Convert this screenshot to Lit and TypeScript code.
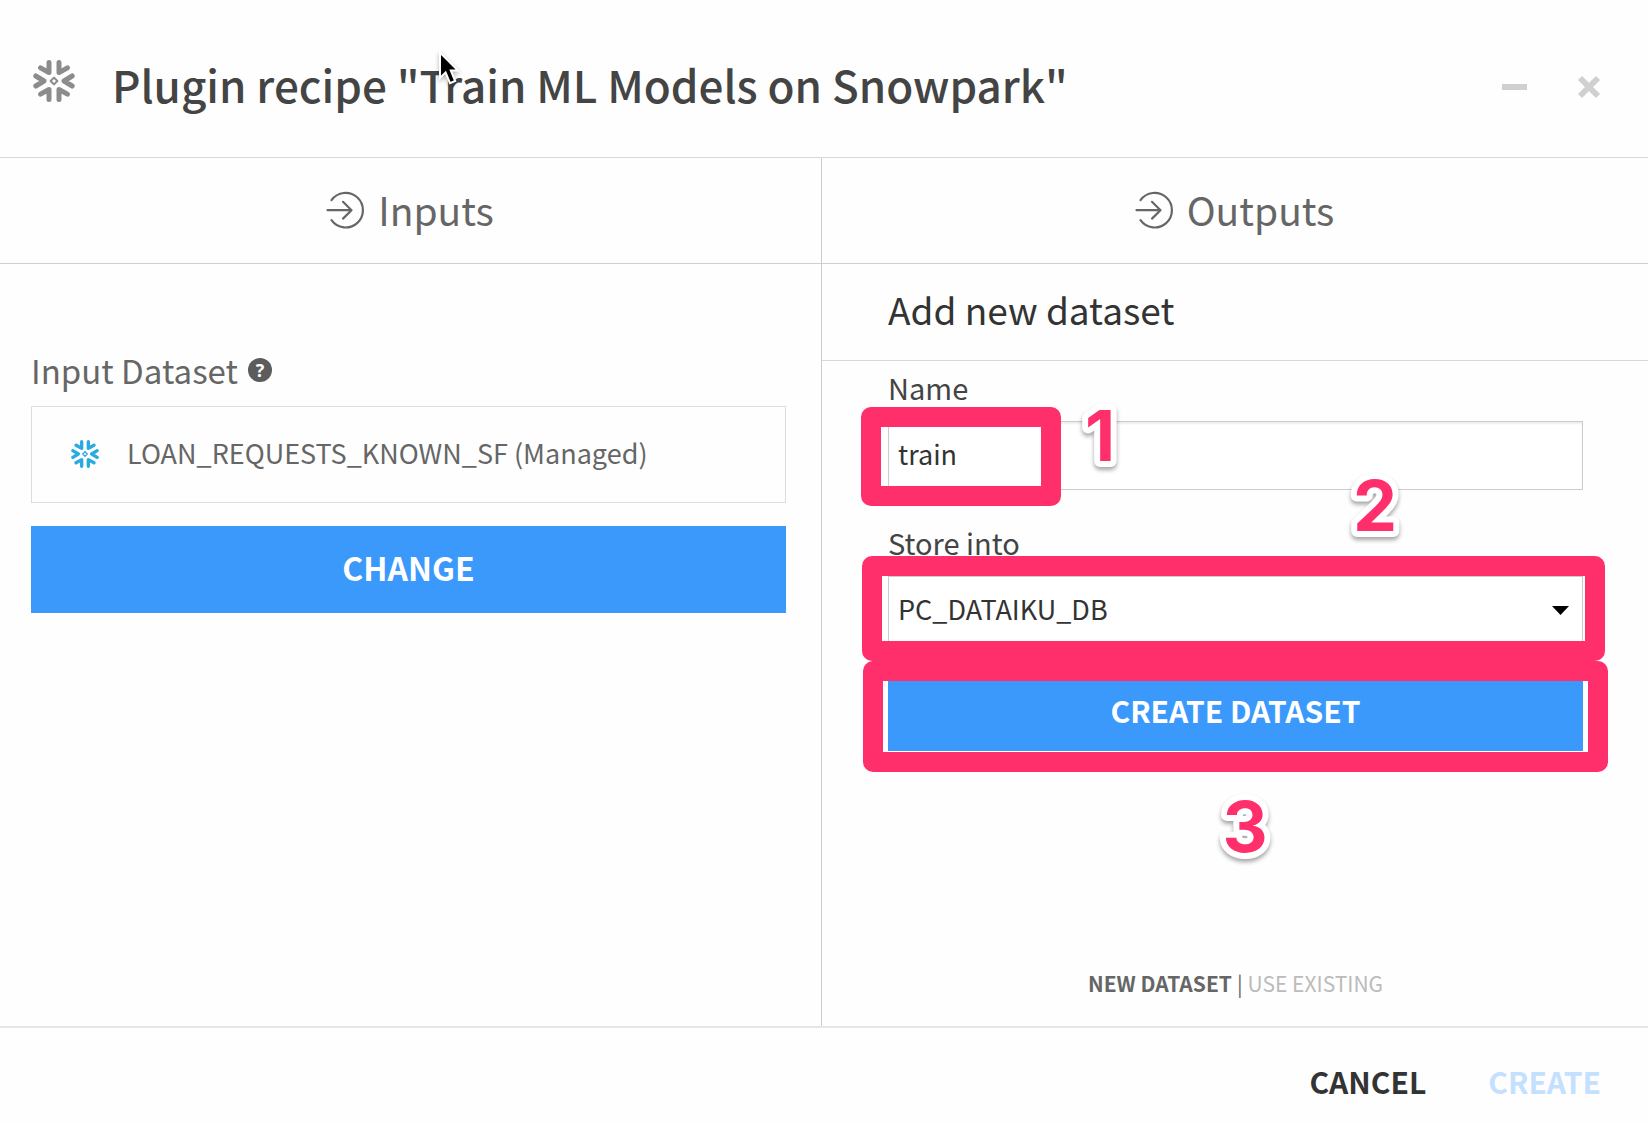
import { LitElement, html, css } from "lit";
import { customElement, property, state } from "lit/decorators.js";

const arrowInCircle = html`
  <svg class="circle-arrow" viewBox="0 0 37 38" width="37" height="38" aria-hidden="true">
    <path d="M4.5 10.2A17.3 17.3 0 1 1 4.5 30.2M0.5 20.2H24.5M16 11.8L24.5 20.2L16 28.6" />
  </svg>
`;

@customElement("snow-icon")
class SnowIcon extends LitElement {
  @property({ type: Number }) size = 42;

  static styles = css`
    :host {
      display: block;
      flex: none;
    }
    .flake {
      display: block;
      fill: none;
      stroke: currentColor;
      stroke-linecap: round;
      stroke-linejoin: round;
    }
    .arms {
      stroke-width: 5;
    }
    .core {
      stroke-width: 2;
    }
  `;

  render() {
    return html`
      <svg class="flake" viewBox="0 0 42 42" width=${this.size} height=${this.size} aria-hidden="true">
        <path
          class="arms"
          d="M16 2.5V12.6L7.6 7.8M26 2.5V12.6L34.4 7.8M16 39.5V29.4L7.6 34.2M26 39.5V29.4L34.4 34.2M2.8 16L11 21L2.8 26M39.2 16L31 21L39.2 26"
        />
        <path class="core" d="M21 17.6L24.4 21L21 24.4L17.6 21Z" />
      </svg>
    `;
  }
}

@customElement("app-root")
class AppRoot extends LitElement {
  @state() private datasetName = "train";

  static styles = css`
    :host {
      display: block;
      font-family: "Noto Sans CJK JP", "Noto Sans CJK SC", "Open Sans", sans-serif;
      color: #666;
      background: #fefefe;
    }
    * {
      box-sizing: border-box;
    }
    h1,
    h2,
    h3 {
      margin: 0;
      font-weight: 400;
    }
    button,
    input,
    select {
      font: inherit;
      margin: 0;
      border: 0;
      border-radius: 0;
      outline: 0;
    }
    button {
      padding: 0;
      background: none;
      color: inherit;
      cursor: pointer;
    }
    .dialog {
      display: flex;
      flex-direction: column;
      min-height: 100vh;
    }
    .header {
      display: flex;
      align-items: center;
      padding: 55px 47px 44px 33px;
      border-bottom: 1px solid #d9d9d9;
    }
    .header snow-icon {
      color: #8c8c8c;
      margin: 0 37px 6px 0;
    }
    .title {
      position: relative;
      flex: 1;
      font-size: 44px;
      line-height: 58px;
      font-weight: 500;
      color: #444;
    }
    .pointer {
      position: absolute;
      left: 324px;
      top: -4px;
      filter: drop-shadow(0 2px 2px rgba(0, 0, 0, 0.3));
    }
    .window-controls {
      display: flex;
      gap: 50px;
      color: #d0d0d0;
      padding-top: 6px;
    }
    .window-controls button,
    .window-controls svg {
      display: block;
    }
    .body {
      flex: 1;
      display: grid;
      grid-template-columns: 138fr 139fr;
    }
    .column {
      display: flex;
      flex-direction: column;
    }
    .column + .column {
      border-left: 1px solid #ccc;
    }
    .column-head {
      display: flex;
      align-items: center;
      justify-content: center;
      gap: 14px;
      padding: 25px 0 28px;
      border-bottom: 1px solid #d0d0d0;
      font-size: 39px;
      line-height: 52px;
      font-weight: 400;
    }
    .circle-arrow {
      fill: none;
      stroke: #666;
      stroke-width: 2.2;
      stroke-linecap: round;
      stroke-linejoin: round;
      overflow: visible;
    }
    .inputs {
      padding: 86px 35px 0 31px;
    }
    .role {
      display: flex;
      align-items: center;
      gap: 10px;
      margin-bottom: 16px;
      font-size: 33px;
      line-height: 40px;
    }
    .help {
      width: 24px;
      height: 24px;
      border-radius: 50%;
      background: #5c5c5c;
      color: #fff;
      font: 700 18px/24px "Open Sans", sans-serif;
      text-align: center;
    }
    .card {
      display: flex;
      align-items: center;
      gap: 28px;
      padding: 0 39px 5px;
      height: 97px;
      border: 1px solid #ddd;
      font-size: 27px;
    }
    .card snow-icon {
      margin-top: 4px;
      color: #29abe2;
    }
    .primary {
      display: block;
      width: 100%;
      background: #3b99fc;
      color: #fff;
      font-weight: 700;
    }
    .change {
      margin-top: 23px;
      padding: 19px 0 24px;
      font-size: 32px;
      line-height: 44px;
    }
    .form-title {
      padding: 19px 66px 25px;
      border-bottom: 1px solid #d9d9d9;
      font-size: 37px;
      line-height: 52px;
      color: #333;
    }
    .form {
      flex: 1;
      display: flex;
      flex-direction: column;
      padding: 9px 65px 27px 66px;
      color: #444;
    }
    .label {
      margin-bottom: 17px;
      font-size: 29px;
      line-height: 34px;
    }
    .field {
      position: relative;
      margin-bottom: 35px;
    }
    .text {
      display: block;
      width: 100%;
      height: 69px;
      padding: 0 9px 4px;
      border: 1px solid #ccc;
      background: #fff;
      box-shadow: inset 0 2px 2px rgba(0, 0, 0, 0.07);
      color: #333;
      font-size: 27px;
    }
    .store {
      margin-bottom: 26px;
    }
    .select {
      display: block;
      width: 100%;
      height: 66px;
      padding: 0 40px 2px 9px;
      appearance: none;
      border: 1px solid #ccc;
      background: #fff;
      color: #333;
      font-size: 27px;
    }
    .caret {
      position: absolute;
      right: 14px;
      top: 30px;
      pointer-events: none;
    }
    .action {
      position: relative;
    }
    .create-dataset {
      padding: 20px 0 19px;
      font-size: 30px;
      line-height: 44px;
    }
    .ring {
      position: absolute;
      border: 20px solid #ff2f6c;
      border-radius: 10px;
      pointer-events: none;
    }
    .ring-name {
      left: -27px;
      top: -14px;
      width: 200px;
      height: 99px;
    }
    .ring-store {
      inset: -20px -22px -19px -26px;
    }
    .ring-create {
      inset: -7px -25px -21px -25px;
    }
    .step {
      position: absolute;
      z-index: 1;
      overflow: visible;
      fill: #ff2f6c;
      stroke: #fff;
      stroke-width: 12px;
      stroke-linejoin: round;
      paint-order: stroke;
      font: 700 70px Inter, "Liberation Sans", sans-serif;
      text-anchor: middle;
      filter: drop-shadow(0 3px 2px rgba(0, 0, 0, 0.35));
      pointer-events: none;
    }
    .step-one {
      left: 182px;
      top: -20px;
    }
    .step-two {
      right: 178px;
      top: -105px;
    }
    .step-three {
      left: calc(50% - 21px);
      top: 124px;
    }
    .switch {
      display: flex;
      justify-content: center;
      gap: 5px;
      margin-top: auto;
      font-size: 21px;
      line-height: 32px;
      color: #666;
    }
    .switch .on {
      font-weight: 700;
    }
    .switch .off {
      color: #bbb;
    }
    .footer {
      display: flex;
      justify-content: flex-end;
      gap: 62px;
      padding: 31px 47px 21px;
      border-top: 2px solid #e6e6e6;
      font-size: 30px;
      line-height: 44px;
      font-weight: 700;
      color: #333;
    }
    .footer button:disabled {
      color: #c4e0ff;
      cursor: default;
    }
  `;

  private onName(e: Event) {
    this.datasetName = (e.target as HTMLInputElement).value;
  }

  private step(n: number, place: string) {
    return html`
      <svg class="step ${place}" viewBox="0 0 60 72" width="60" height="72">
        <text x="30" y="60">${n}</text>
      </svg>
    `;
  }

  render() {
    return html`
      <div class="dialog" role="dialog" aria-labelledby="title">
        <header class="header">
          <snow-icon .size=${42}></snow-icon>
          <h1 class="title" id="title">
            Plugin recipe "Train ML Models on Snowpark"
            <svg class="pointer" viewBox="0 0 24 36" width="24" height="36" aria-hidden="true">
              <path
                d="M4 1.5V27L9.6 21.6L14 32.2L19.2 30L14.8 19.6H22Z"
                fill="#000"
                stroke="#fff"
                stroke-width="2"
              />
            </svg>
          </h1>
          <div class="window-controls">
            <button aria-label="Minimize">
              <svg viewBox="0 0 25 24" width="25" height="24"><path d="M0 9H25V15H0Z" fill="currentColor" /></svg>
            </button>
            <button aria-label="Close">
              <svg viewBox="0 0 24 24" width="24" height="24">
                <path d="M3 3L21 21M21 3L3 21" stroke="currentColor" stroke-width="6" />
              </svg>
            </button>
          </div>
        </header>

        <main class="body">
          <section class="column">
            <h2 class="column-head">${arrowInCircle}Inputs</h2>
            <div class="inputs">
              <div class="role">
                Input Dataset
                <button class="help">?</button>
              </div>
              <div class="card">
                <snow-icon .size=${28}></snow-icon>
                <span>LOAN_REQUESTS_KNOWN_SF (Managed)</span>
              </div>
              <button class="primary change">CHANGE</button>
            </div>
          </section>

          <section class="column">
            <h2 class="column-head">${arrowInCircle}Outputs</h2>
            <h3 class="form-title">Add new dataset</h3>
            <div class="form">
              <label class="label" for="name">Name</label>
              <div class="field">
                <input class="text" id="name" type="text" .value=${this.datasetName} @input=${this.onName} />
                <div class="ring ring-name"></div>
                ${this.step(1, "step-one")}
              </div>
              <label class="label" for="store">Store into</label>
              <div class="field store">
                <select class="select" id="store">
                  <option>PC_DATAIKU_DB</option>
                </select>
                <svg class="caret" viewBox="0 0 17 9" width="17" height="9" aria-hidden="true">
                  <path d="M0 0H17L8.5 9Z" fill="#000" />
                </svg>
                <div class="ring ring-store"></div>
                ${this.step(2, "step-two")}
              </div>
              <div class="action">
                <button class="primary create-dataset">CREATE DATASET</button>
                <div class="ring ring-create"></div>
                ${this.step(3, "step-three")}
              </div>
              <div class="switch">
                <button class="on">NEW DATASET</button>
                <span>|</span>
                <button class="off">USE EXISTING</button>
              </div>
            </div>
          </section>
        </main>

        <footer class="footer">
          <button>CANCEL</button>
          <button disabled>CREATE</button>
        </footer>
      </div>
    `;
  }
}
